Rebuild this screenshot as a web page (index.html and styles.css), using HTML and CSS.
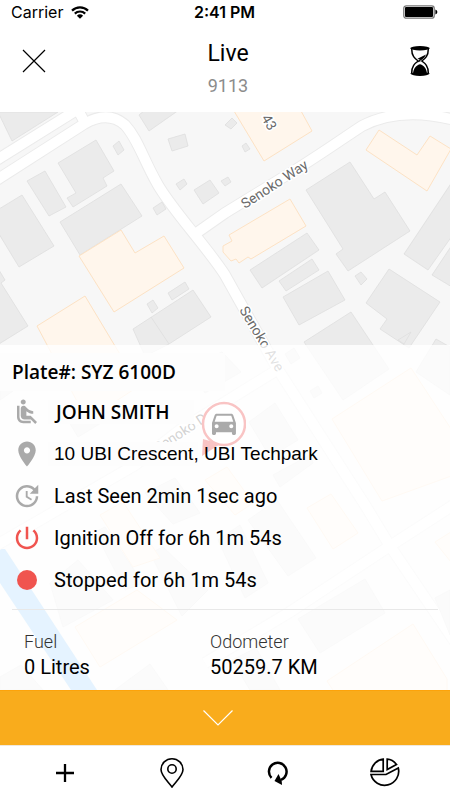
FILE: index.html
```html
<!DOCTYPE html>
<html lang="en">
    <head>
        <meta charset="utf-8">
        <meta name="viewport" content="width=device-width, initial-scale=1">
        <title>Live - 9113</title>
        <link rel="stylesheet" href="styles.css">
    </head>
    <body>
        <div class="status">
            <div class="carrier">
                Carrier
                <svg width="18" height="13" viewBox="0 0 18 13">
                    <path d="M1 4.6a11.5 11.5 0 0 1 16 0M3.8 7.6a7.5 7.5 0 0 1 10.4 0" fill="none" stroke="#000" stroke-width="2.2"/>
                    <path d="M5.9 9.7a4.5 4.5 0 0 1 6.2 0L9 12.8z"/>
                </svg>
            </div>
            <div class="time">2:41 PM</div>
            <svg class="battery" width="35" height="14" viewBox="0 0 35 14">
                <rect x=".8" y=".8" width="30.4" height="12.4" rx="2.5" fill="none" stroke="#777" stroke-width="1.3"/>
                <rect x="2" y="2" width="28" height="10" rx="1"/>
                <path d="M32.4 4.6q2 .6 2 2.4t-2 2.4z"/>
            </svg>
        </div>

        <header class="header">
            <button class="icon-button" aria-label="Close">
                <svg width="24" height="24" viewBox="0 0 24 24"><path d="M1 1l22 22M23 1L1 23" stroke="#000" stroke-width="1.2"/></svg>
            </button>
            <div class="heading">
                <h1>Live</h1>
                <div class="number">9113</div>
            </div>
            <button class="icon-button" aria-label="History">
                <svg width="20" height="30" viewBox="0 0 20 30">
                    <ellipse cx="10" cy="2.2" rx="9.8" ry="2.2"/>
                    <path d="M.2 27.6q2-1.6 9.8-1.6t9.8 1.6q-2 2.4-9.8 2.4T.2 27.600z"/>
                    <path d="M1.700 3c0 7 3 9.500 6.500 12C4.700 17.500 1.700 20 1.700 27M18.300 3c0 7-3 9.500-6.500 12 3.500 2.500 6.500 5 6.500 12" fill="none" stroke="#000" stroke-width="1.500"/>
                    <path d="M16 8.500c-1 2.500-2.500 4-5 5.700L7.500 12.700l4-2zM3 28c.2-4 2-7.500 5-9q2-1.500 4 0c3 1.500 4.800 5 5 9z"/>
                    <path d="M9.500 13.500l1.500 1.500-3.500 1.500z"/>
                </svg>
            </button>
        </header>

        <main class="live">
            <svg class="map" viewBox="0 112 450 578" preserveAspectRatio="xMidYMin slice" aria-hidden="true">
                <!-- canal -->
                <path class="water" d="M0 549h5l92 141H71L0 583z"/>

                <!-- road edges, then the roads -->
                <g class="road-edge">
                    <path d="M-5 181L84 124Q108 110 125 125C138 139 143 159 158 185S207 247 225 275L277 368 365 505 390 546 455 642"/>
                    <path d="M-5 161L80 108M77 108l8 15"/>
                    <path d="M195 234L225 213 300 167C330 148 345 137 362 126Q400 106 455 120"/>
                    <path d="M277 370L180 430 135 465-5 546M455 504L390 546 290 612 205 663"/>
                </g>
                <g class="road">
                    <path d="M-5 181L84 124Q108 110 125 125C138 139 143 159 158 185S207 247 225 275L277 368 365 505 390 546 455 642"/>
                    <path d="M-5 161L80 108M77 108l8 15"/>
                    <path d="M195 234L225 213 300 167C330 148 345 137 362 126Q400 106 455 120"/>
                    <path d="M277 370L180 430 135 465-5 546M455 504L390 546 290 612 205 663"/>
                </g>

                <g class="building">
                    <path d="M-2 112H58L12 141z"/>
                    <path d="M58 163L96 140l18 31-11 7 4 8-34 21-6-9 9-5z"/>
                    <path d="M113 146l6-5 5 9-6 5z"/>
                    <path d="M27 181l18-10 21 36-17 9z"/>
                    <path d="M-1 209L22 195l32 51-35 21-20-33z"/>
                    <path d="M60 222l61-38 21 32-62 39z"/>
                    <path d="M-1 270l6 10-4 3 27 43-29 18z"/>
                    <path d="M139 115l6-5h34l-30 21z"/>
                    <path d="M168 139l17-5 3 12-16 5zM176 184l8-5 3 5-7 6zM194 190l16-10 9 13-16 11zM153 208l9-6 4 7-9 6z"/>
                    <path d="M221 181l7-4 3 5-6 4zM225 125l7-7 5 5-6 6zM242 146l4-3 4 6-5 3z"/>
                    <path d="M147 304l6-4 5 8-6 5zM168 293l17-11 4 7-17 11z"/>
                    <path d="M133 329l60-39 18 27-42 27-24 12zM151 317l18 27"/>
                    <path d="M306 190l44-28 24 37 11-7 25 39-62 40-12-17 7-5z"/>
                    <path d="M250 270l57-37 12 17-57 38zM279 281l33-22 7 11-33 21zM283 297l45-26 17 29-46 25z"/>
                    <path d="M355 276l6-4 6 7-6 6z"/>
                    <path d="M404 254l48-72v54l-24 34zM432 275l20-30v42z"/>
                    <path d="M389 269l51 33-31 46-29-19 7-10-21-16z"/>
                    <path d="M304 342l47-30 38 57-46 31z"/>
                    <path d="M398 340l13-8-7 12zM436 339l14 8v48l-34-23z"/>
                    <path d="M285 354l9-6 6 10-9 6zM310 391l8-5 4 7-8 5z"/>
                    <path d="M190 366l32-14 19 20-36 21z"/>
                    <path d="M249 422l26-19 23 37-28 17zM273 475l37-20 3 8-33 24z"/>
                    <path d="M0 386l10-5 3 10-13 9zM62 410l28-17 16 27-28 17z"/>
                    <path d="M145 493l30-15 25 35-27 11zM50 583l28-23 35 40-50 27z"/>
                    <path d="M95 532l10-5 38 56-18 7zM150 553l13-6 45 43-26 26z"/>
                    <path d="M248 520l29-20 39 58-28 18zM218 540l22-15 28 58-23 15z"/>
                    <path d="M298 619l67-40 20 34-65 40zM435 598l15-8v45z"/>
                    <path d="M0 677l21-12 22 25H0zM115 690l35-26 18 26zM232 660l24-12 24 42h-30z"/>
                </g>

                <g class="shop">
                    <path d="M234 111l30 50 48-30-11-20z"/>
                    <path d="M366 150l13-20 38 25 13-19 21 13-24 42z"/>
                    <path d="M229 235l61-36 16 27-55 33-3-2-9 6-3-4-5 2-8-9v-6l9-5z"/>
                    <path d="M79 256l42-26 14 23 29-17 20 32-70 44z"/>
                    <path d="M37 326l48-30 54 90-52 34z"/>
                    <path d="M332 419l79-51 65 99-94 34z"/>
                    <path d="M205 480l22-13 26 36-18 12zM307 508l24-14 27 39-25 16zM435 542l16-10v30z"/>
                    <path d="M100 515l23-13 37 56-27 9z"/>
                    <path d="M75 627l62-37 40 30-77 47zM327 681l86-57 34 55v14H335z"/>
                </g>

                <g class="street">
                    <text transform="translate(245 209) rotate(-33)">Senoko Way</text>
                    <text transform="translate(239 310) rotate(59)">Senoko Ave</text>
                    <text transform="translate(261 118) rotate(59)">43</text>
                    <text class="street-dark" transform="translate(158 453) rotate(-33)">Senoko Dr</text>
                </g>
            </svg>

            <section class="panel">
                <svg class="marker" width="46" height="60" viewBox="0 0 46 60" aria-hidden="true">
                    <path d="M3 38L2 55 20 43z" fill="#f9c4c4"/>
                    <circle cx="24" cy="23" r="21" fill="#fff" stroke="#f9c4c4" stroke-width="2.500"/>
                    <path transform="translate(8 6) scale(1.330)" d="M18.920 6.010C18.720 5.420 18.160 5 17.500 5h-11c-.66 0-1.210.42-1.420 1.010L3 12v8c0 .55.450 1 1 1h1c.55 0 1-.45 1-1v-1h12v1c0 .55.450 1 1 1h1c.55 0 1-.45 1-1v-8l-2.080-5.990zM6.500 16c-.83 0-1.500-.67-1.500-1.500S5.670 13 6.500 13s1.500.67 1.500 1.500S7.330 16 6.500 16zm11 0c-.83 0-1.500-.67-1.500-1.500s.67-1.500 1.500-1.500 1.500.67 1.500 1.500-.67 1.500-1.500 1.500zM5 11l1.500-4.500h11L19 11H5z" fill="#aaa"/>
                </svg>

                <h2 class="plate">Plate#: SYZ 6100D</h2>

                <ul class="details">
                    <li>
                        <svg class="icon" viewBox="0 0 24 24"><path d="M7.590 5.410c-.78-.78-.78-2.050 0-2.830.78-.78 2.050-.78 2.830 0 .78.78.78 2.050 0 2.830-.79.790-2.050.790-2.830 0zM6 16V7H4v9c0 2.760 2.240 5 5 5h6v-2H9c-1.660 0-3-1.340-3-3zm14 4.070L14.930 15H11.500v-3.680c1.400 1.150 3.600 2.160 5.500 2.160v-2.160c-1.660.02-3.610-.87-4.670-2.040l-1.400-1.550c-.19-.21-.43-.38-.69-.5-.29-.14-.62-.23-.96-.23h-.03C8.010 7 7 8.010 7 9.250V15c0 1.660 1.340 3 3 3h5.070l3.500 3.500L20 20.070z"/></svg>
                        <span class="driver">JOHN SMITH</span>
                    </li>
                    <li>
                        <svg class="icon" viewBox="0 0 24 24"><path d="M12 2C8.130 2 5 5.130 5 9c0 5.250 7 13 7 13s7-7.750 7-13c0-3.870-3.130-7-7-7zm0 9.500c-1.380 0-2.500-1.120-2.500-2.500s1.120-2.500 2.500-2.500 2.500 1.120 2.500 2.500-1.120 2.500-2.500 2.500z"/></svg>
                        <span class="address">10 UBI Crescent, UBI Techpark</span>
                    </li>
                    <li>
                        <svg class="icon" viewBox="0 0 24 24"><path d="M21 10.120h-6.780l2.740-2.820c-2.730-2.700-7.150-2.800-9.880-.1-2.730 2.710-2.730 7.080 0 9.790 2.730 2.710 7.150 2.710 9.880 0C18.320 15.650 19 14.080 19 12.100h2c0 1.980-.88 4.550-2.640 6.290-3.510 3.480-9.210 3.480-12.720 0-3.500-3.470-3.530-9.110-.02-12.580 3.510-3.470 9.140-3.470 12.650 0L21 3v7.120zM12.500 8v4.250l3.500 2.080-.72 1.210L11 13V8h1.500z"/></svg>
                        <span>Last Seen 2min 1sec ago</span>
                    </li>
                    <li>
                        <svg class="icon red" viewBox="0 0 24 24"><path d="M13 3h-2v10h2V3zm4.830 2.170l-1.420 1.420C17.990 7.860 19 9.810 19 12c0 3.870-3.130 7-7 7s-7-3.130-7-7c0-2.190 1.010-4.140 2.580-5.420L6.170 5.170C4.230 6.820 3 9.260 3 12c0 4.970 4.030 9 9 9s9-4.030 9-9c0-2.740-1.230-5.180-3.170-6.830z"/></svg>
                        <span>Ignition Off for 6h 1m 54s</span>
                    </li>
                    <li>
                        <svg class="icon red" viewBox="0 0 24 24"><circle cx="12" cy="12" r="8"/></svg>
                        <span>Stopped for 6h 1m 54s</span>
                    </li>
                </ul>

                <dl class="stats">
                    <div>
                        <dt>Fuel</dt>
                        <dd>0 Litres</dd>
                    </div>
                    <div>
                        <dt>Odometer</dt>
                        <dd>50259.7 KM</dd>
                    </div>
                </dl>
            </section>
        </main>

        <button class="collapse" aria-label="Hide details">
            <svg width="30" height="16" viewBox="0 0 30 16"><path d="M.5.5L15 15 29.500.5" fill="none" stroke="#fff" stroke-width="1.200"/></svg>
        </button>

        <nav class="tabs">
            <a href="#add" aria-label="Add">
                <svg width="18" height="18" viewBox="0 0 18 18"><path d="M9 0v18M0 9h18" stroke="#000" stroke-width="2.300"/></svg>
            </a>
            <a href="#places" aria-label="Places">
                <svg width="24" height="30" viewBox="0 0 24 30" fill="none" stroke="#000" stroke-width="1.600">
                    <path d="M12 29C8 23.500 1 17.500 1 11.500a11 10.700 0 0 1 22 0C23 17.500 16 23.500 12 29z"/>
                    <circle cx="12" cy="11" r="4.200"/>
                </svg>
            </a>
            <a href="#refresh" aria-label="Refresh">
                <svg width="22" height="24" viewBox="0 0 22 24">
                    <path d="M4.500 16.800A8.800 8.800 0 1 1 14 18.800" fill="none" stroke="#000" stroke-width="2.500"/>
                    <path d="M11.500 13L7.500 20l7.500 4-.3-4z"/>
                </svg>
            </a>
            <a href="#reports" aria-label="Reports">
                <svg width="30" height="30" viewBox="0 0 30 30" fill="none" stroke="#000" stroke-width="1.700">
                    <path d="M13.200 1.200V13.300H1.100A13.800 13.800 0 0 1 13.200 1.200z"/>
                    <path d="M17.200 1.200Q22.500 1.500 26.500 6.500L17.200 11.500z"/>
                    <path d="M1 16.500H16L28.300 10A14 14 0 1 1 1 16.500z"/>
                </svg>
            </a>
        </nav>
    </body>
</html>
```

FILE: styles.css
```css
* {
    box-sizing: border-box;
}

body {
    display: flex;
    flex-direction: column;
    min-height: 100vh;
    margin: 0;
    background: #fff;
    color: #000;
    font-family: Roboto, sans-serif;
    font-size: 20px;
}

h1, h2, ul, dl, dd {
    margin: 0;
    padding: 0;
}

button {
    border: 0;
    padding: 0;
    background: none;
    cursor: pointer;
}

svg {
    display: block;
}

/* status bar */
.status {
    display: grid;
    grid-template-columns: 1fr auto 1fr;
    align-items: center;
    height: 24px;
    padding: 0 12px 0 11px;
    font-family: Inter, sans-serif;
    font-size: 16px;
}

.carrier {
    display: flex;
    align-items: center;
    gap: 8px;
}

.time {
    font-weight: 600;
}

.battery {
    justify-self: end;
}

/* header */
.header {
    display: flex;
    justify-content: space-between;
    align-items: center;
    height: 88px;
    padding: 0 20px 14px 22px;
}

.heading {
    padding-top: 18px;
    text-align: center;
}

.heading h1 {
    font-size: 23px;
    font-weight: 400;
    line-height: 32px;
}

.number {
    color: #8c8c8c;
    font-size: 18px;
    line-height: 32px;
}

/* map */
.live {
    position: relative;
    display: flex;
    flex: 1;
    flex-direction: column;
    justify-content: flex-end;
    overflow: hidden;
    background: #f7f7f7;
}

.map {
    position: absolute;
    top: 0;
    left: 0;
    width: 100%;
    height: 100%;
}

.water {
    fill: #7cc4fc;
}

.road-edge {
    fill: none;
    stroke: #ebebeb;
    stroke-width: 12;
}

.road {
    fill: none;
    stroke: #fff;
    stroke-width: 10;
}

.building {
    fill: #ebebeb;
    stroke: #dedede;
    stroke-width: .8;
}

.shop {
    fill: #fff6ec;
    stroke: #fde2c4;
}

.street {
    fill: #6a6a6a;
    stroke: #fff;
    stroke-width: 3;
    paint-order: stroke;
    font-size: 14px;
}

.street-dark {
    fill: #222;
}

/* vehicle details */
.panel {
    position: relative;
    isolation: isolate;
    padding-top: 8px;
    background: rgba(255, 255, 255, .8);
}

.marker {
    position: absolute;
    z-index: -1;
    top: 56px;
    left: 200px;
}

.plate {
    width: 50%;
    padding-left: 12px;
    background: #fdfdfd;
    font-family: "Open Sans", sans-serif;
    font-size: 19px;
    font-weight: 600;
    line-height: 38px;
}

.details {
    margin: 0 12px;
    padding-bottom: 8px;
    border-bottom: 1px solid #e8e8e8;
    list-style: none;
}

.details li {
    display: flex;
    align-items: center;
    gap: 6px;
    height: 42px;
}

.details span {
    padding-left: 6px;
    line-height: 24px;
}

.icon {
    width: 30px;
    height: 30px;
    fill: #aaa;
}

.red {
    fill: #f0544f;
}

.details .driver {
    width: 146px;
    padding-left: 8px;
    background: #fdfdfd;
    font-family: "Open Sans", sans-serif;
    font-size: 19px;
    font-weight: 600;
}

.details .address {
    background: linear-gradient(#fdfdfd, #fdfdfd) no-repeat 0 0 / 150px 100%;
    font-family: "Liberation Sans", sans-serif;
    font-size: 19px;
}

.stats {
    display: grid;
    grid-template-columns: 186px 1fr;
    padding: 20px 24px 10px;
}

.stats dt {
    color: #333;
    font-size: 18px;
    font-weight: 300;
    line-height: 24px;
}

.stats dd {
    line-height: 26px;
}

/* bottom */
.collapse {
    display: flex;
    justify-content: center;
    align-items: center;
    height: 56px;
    padding-right: 14px;
    border-top: 1px solid #fda30a;
    border-bottom: 1px solid #f0e8dc;
    background: #f9ac1c;
}

.tabs {
    display: grid;
    grid-template-columns: repeat(4, 1fr);
    height: 54px;
    padding: 0 12px;
}

.tabs a {
    display: flex;
    justify-content: center;
    align-items: center;
}
```
